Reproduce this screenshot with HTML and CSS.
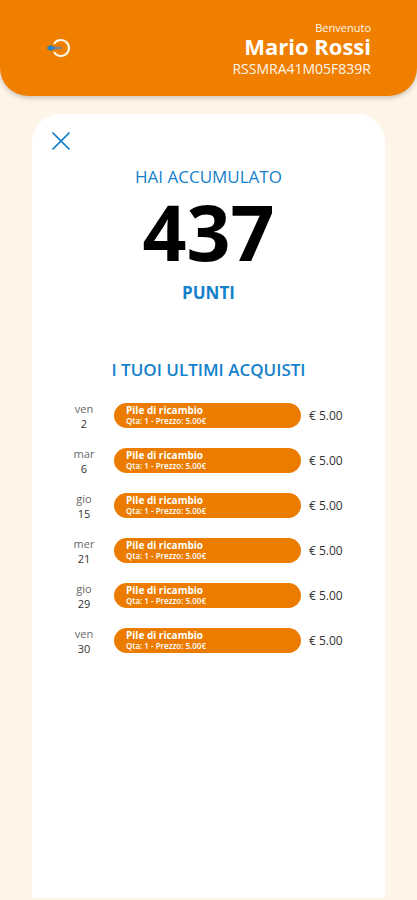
FILE: index.html
```html
<!DOCTYPE html>
<html lang="it">
<head>
    <meta charset="UTF-8">
    <meta name="viewport" content="width=device-width, initial-scale=1.0">
    <title>I tuoi punti</title>
    <link rel="stylesheet" href="styles.css">
</head>
<body>
    <header class="header">
        <button class="icon-btn" type="button" aria-label="Esci">
            <svg width="26" height="20" viewBox="0 0 26 20" fill="none">
                <path d="M8 6A8 8 0 1 1 8 14" stroke="#fff3e2" stroke-width="2.2"/>
                <path d="M5 10H16" stroke="#8a7f86" stroke-width="2.6"/>
                <path d="M0.5 10L4.5 6.8L6.5 8.6H9V11.4H6.5L4.5 13.2Z" fill="#2583c4"/>
            </svg>
        </button>
        <div class="user">
            <span class="welcome">Benvenuto</span>
            <span class="name">Mario Rossi</span>
            <span class="code">RSSMRA41M05F839R</span>
        </div>
    </header>

    <main class="card">
        <button class="icon-btn" type="button" aria-label="Chiudi">
            <svg width="18" height="18" viewBox="0 0 18 18" fill="none">
                <path d="M0.5 0.5L17.5 17.5M17.5 0.5L0.5 17.5" stroke="#1581cc" stroke-width="1.6"/>
            </svg>
        </button>

        <section class="points">
            <h1 class="label">HAI ACCUMULATO</h1>
            <p class="total">437</p>
            <p class="label label-bold">PUNTI</p>
        </section>

        <section class="orders">
            <h2 class="label label-medium">I TUOI ULTIMI ACQUISTI</h2>
            <ul class="list">
                <li class="row">
                    <div class="date"><span class="weekday">ven</span><span>2</span></div>
                    <div class="item"><strong>Pile di ricambio</strong><span>Qta: 1 - Prezzo: 5.00€</span></div>
                    <span class="price">€ 5.00</span>
                </li>
                <li class="row">
                    <div class="date"><span class="weekday">mar</span><span>6</span></div>
                    <div class="item"><strong>Pile di ricambio</strong><span>Qta: 1 - Prezzo: 5.00€</span></div>
                    <span class="price">€ 5.00</span>
                </li>
                <li class="row">
                    <div class="date"><span class="weekday">gio</span><span>15</span></div>
                    <div class="item"><strong>Pile di ricambio</strong><span>Qta: 1 - Prezzo: 5.00€</span></div>
                    <span class="price">€ 5.00</span>
                </li>
                <li class="row">
                    <div class="date"><span class="weekday">mer</span><span>21</span></div>
                    <div class="item"><strong>Pile di ricambio</strong><span>Qta: 1 - Prezzo: 5.00€</span></div>
                    <span class="price">€ 5.00</span>
                </li>
                <li class="row">
                    <div class="date"><span class="weekday">gio</span><span>29</span></div>
                    <div class="item"><strong>Pile di ricambio</strong><span>Qta: 1 - Prezzo: 5.00€</span></div>
                    <span class="price">€ 5.00</span>
                </li>
                <li class="row">
                    <div class="date"><span class="weekday">ven</span><span>30</span></div>
                    <div class="item"><strong>Pile di ricambio</strong><span>Qta: 1 - Prezzo: 5.00€</span></div>
                    <span class="price">€ 5.00</span>
                </li>
            </ul>
        </section>
    </main>
</body>
</html>
```
FILE: styles.css
```css
* {
    margin: 0;
    padding: 0;
    box-sizing: border-box;
}

body {
    min-height: 100vh;
    display: flex;
    flex-direction: column;
    background: #fef4e8;
    font-family: 'Open Sans', 'Noto Sans', sans-serif;
    color: #333;
}

.header {
    display: flex;
    justify-content: space-between;
    align-items: center;
    padding: 20px 46px 16px;
    background: #f07f00;
    border-radius: 0 0 28px 28px;
    box-shadow: 0 2px 5px rgba(0,0,0,0.2);
}

.icon-btn {
    display: block;
    background: none;
    border: none;
    cursor: pointer;
}

.icon-btn svg {
    display: block;
}

.header .icon-btn {
    margin-bottom: 4px;
}

.user {
    display: flex;
    flex-direction: column;
    align-items: flex-end;
    color: #fff6ea;
}

.welcome {
    font-size: 11px;
    line-height: 15px;
}

.name {
    font-size: 22px;
    font-weight: 700;
    line-height: 22px;
    color: white;
}

.code {
    font-size: 14px;
    line-height: 23px;
}

.card {
    flex: 1;
    margin: 18px 32px 2px;
    padding: 18px 20px;
    background: white;
    border-radius: 28px 28px 0 0;
}

.points,
.orders {
    display: flex;
    flex-direction: column;
    align-items: center;
}

.points {
    padding-top: 15px;
}

.label {
    font-size: 17px;
    font-weight: 400;
    line-height: 24px;
    color: #1581cc;
}

.label-medium {
    font-weight: 600;
}

.label-bold {
    font-weight: 700;
}

.total {
    font-size: 77px;
    font-weight: 700;
    line-height: 86px;
    margin-bottom: 6px;
    color: black;
}

.orders {
    padding-top: 53px;
}

.list {
    align-self: stretch;
    display: flex;
    flex-direction: column;
    gap: 17px;
    padding: 19px 20px 0 12px;
    list-style: none;
}

.row {
    display: grid;
    grid-template-columns: 40px 1fr 36px;
    gap: 8px;
    align-items: center;
}

.date {
    display: flex;
    flex-direction: column;
    align-items: center;
    font-size: 11px;
    line-height: 15px;
    margin-bottom: -2px;
}

.weekday {
    color: #666;
}

.item {
    display: flex;
    flex-direction: column;
    margin-left: 2px;
    padding: 2px 12px 3px;
    background: #ec7c00;
    border-radius: 13px;
    color: white;
    font-size: 8px;
    font-weight: 600;
    line-height: 9px;
}

.item strong {
    font-size: 10px;
    font-weight: 700;
    line-height: 11px;
}

.price {
    padding-top: 2px;
    font-size: 12px;
    line-height: 14px;
    white-space: nowrap;
}
```
